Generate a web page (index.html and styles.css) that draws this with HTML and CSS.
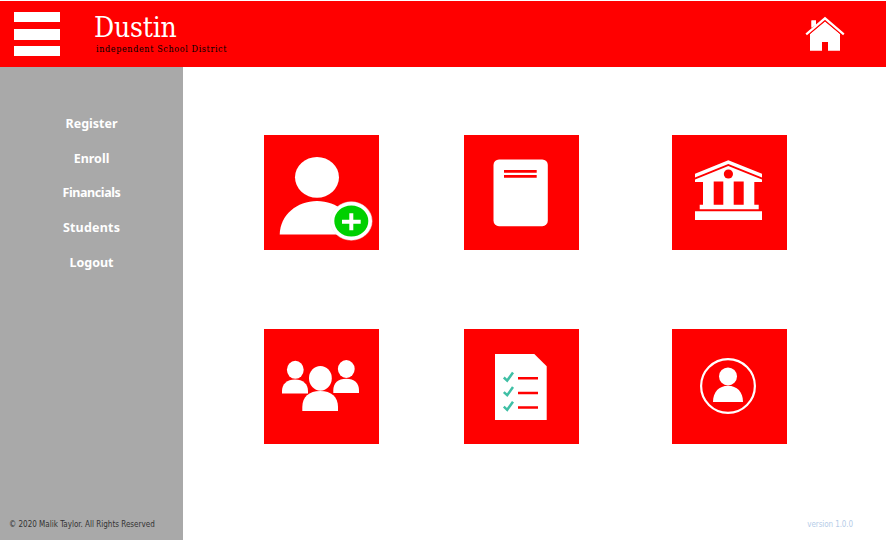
FILE: index.html
```html
<!DOCTYPE html>
<html lang="en">
<head>
<meta charset="utf-8">
<title>Dustin Independent School District</title>
<link rel="stylesheet" href="styles.css">
</head>
<body>
<header class="topbar">
  <div class="menu"><span></span><span></span><span></span></div>
  <div class="brand">
    <h1 class="brand-name">Dustin</h1>
    <p class="brand-sub">independent School District</p>
  </div>
  <svg class="home" viewBox="0 0 40 36" fill="#fff">
    <path d="M6.5 13V4.5H11V9M5 18 20 5.5 35 18V34.8H23V26H17V34.8H5Z"/>
    <path d="M1.2 18.3 20 2.3 38.8 18.3" fill="none" stroke="red" stroke-width="4.2"/>
    <path d="M6.5 12V4.5H11V9Z"/>
    <path d="M1.2 18.3 20 2.3 38.8 18.3" fill="none" stroke="#fff" stroke-width="2.2"/>
  </svg>
</header>
<div class="body">
  <aside class="sidebar">
    <nav class="nav">
      <a>Register</a>
      <a>Enroll</a>
      <a class="tight">Financials</a>
      <a class="loose">Students</a>
      <a>Logout</a>
    </nav>
    <p class="copyright">© 2020 Malik Taylor. All Rights Reserved</p>
  </aside>
  <main class="main">
    <div class="tiles">
      <svg class="tile" viewBox="0 0 115 115" fill="#fff">
        <ellipse cx="53" cy="42.3" rx="22" ry="20.4"/>
        <path d="M15.7 99.5C16 80 33 66 53 66S90 80 90 99.5Z"/>
        <ellipse cx="87.3" cy="86" rx="20.8" ry="19.2" stroke="#eee" stroke-width=".5"/>
        <ellipse cx="87.3" cy="86" rx="17" ry="15.6" fill="#00d000"/>
        <path d="M78 86.7H96.7M87.3 78.2V95.2" stroke="#fff" stroke-width="4"/>
      </svg>
      <svg class="tile" viewBox="0 0 115 115" fill="#fff">
        <rect x="29.5" y="24.5" width="54.3" height="66.7" rx="5.5"/>
        <path d="M40 36.4H72.7M40 41.4H72.7" stroke="red" stroke-width="2.8"/>
      </svg>
      <svg class="tile" viewBox="0 0 115 115" fill="#fff">
        <path d="M23 38.7 56.3 25.3 90 38.7V42.5L56.3 29 23 42.5Z"/>
        <path d="M23 44.5 56.3 31 90 44.5V47H82.3V69.7H86.7V74.3H27.7V69.7H31V47H23Z"/>
        <path d="M23 76.3H90V85H23Z"/>
        <path d="M41.7 46.5H51.3V69.7H41.7ZM61.7 46.5H71.7V69.7H61.7Z" fill="red"/>
        <circle cx="56.4" cy="39" r="4.6" fill="red"/>
      </svg>
      <svg class="tile" viewBox="0 0 115 115" fill="#fff">
        <ellipse cx="31.3" cy="40.8" rx="8.4" ry="9"/>
        <path d="M18 64.5V62C18 55 23 50.5 31 50.5S44 55 44 62V64.5Z"/>
        <ellipse cx="82.3" cy="40" rx="8.4" ry="9"/>
        <path d="M69.3 64V61.3C69.3 54 74 49.7 82.2 49.7S95 54 95 61.3V64Z"/>
        <ellipse cx="56.4" cy="49.3" rx="11.4" ry="12.4"/>
        <path d="M38.3 82V78C38.3 68 45 62 56.2 62S74 68 74 78V82Z"/>
      </svg>
      <svg class="tile" viewBox="0 0 115 115" fill="#fff">
        <path d="M31 25H70.3L82.7 37.3V91H31Z"/>
        <path d="M54 49.3H74M54 64H74M54 78.6H74" stroke="red" stroke-width="2.5"/>
        <path d="M39.8 48.5 43.2 51.6 49 43.5M39.8 63.1 43.2 66.2 49 58.1M39.8 77.7 43.2 80.8 49 72.7" fill="none" stroke="#3fbfa5" stroke-width="2.5"/>
      </svg>
      <svg class="tile" viewBox="0 0 115 115" fill="#fff">
        <circle cx="56" cy="57" r="26.9" fill="none" stroke="#fff" stroke-width="2.2"/>
        <circle cx="56" cy="47.4" r="9"/>
        <path d="M41 73C41 63 47 56.8 56 56.8S71 63 71 73Z"/>
      </svg>
    </div>
    <p class="version">version 1.0.0</p>
  </main>
</div>
</body>
</html>
```
FILE: styles.css
```css
* { box-sizing: border-box; }
body {
  margin: 0;
  width: 886px;
  height: 540px;
  padding-top: 1px;
  overflow: hidden;
  background: #fff;
  display: flex;
  flex-direction: column;
  font-family: "DejaVu Sans Condensed", "DejaVu Sans", sans-serif;
}
h1, p { margin: 0; font-weight: normal; }
.topbar {
  height: 66px;
  flex: none;
  background: red;
  display: flex;
  align-items: flex-start;
  padding: 11px 41px 0 14px;
}
.menu {
  width: 46px;
  height: 44px;
  display: flex;
  flex-direction: column;
  justify-content: space-between;
}
.menu span { height: 10px; background: #fff; }
.menu span:nth-child(2) { height: 11px; }
.brand { margin-left: 34px; white-space: nowrap; }
.brand-name {
  font: 28px/32px "DejaVu Serif Condensed", "DejaVu Serif", serif;
  font-stretch: condensed;
  letter-spacing: -0.2px;
  color: #fff;
}
.brand-sub {
  font: 9px/12px "DejaVu Serif", serif;
  font-stretch: condensed;
  letter-spacing: 0.6px;
  margin: -1px 0 0 2px;
  color: #000;
}
.home { width: 40px; height: 36px; margin: 4px 0 0 auto; }
.body { flex: 1; display: flex; }
.sidebar {
  width: 183px;
  background: #a9a9a9;
  display: flex;
  flex-direction: column;
  justify-content: space-between;
  padding: 40px 0 8px;
}
.nav {
  display: flex;
  flex-direction: column;
  align-items: center;
  font: bold 12.5px/34.7px "Noto Sans", sans-serif;
  color: #fff;
}
.tight { letter-spacing: -0.4px; }
.loose { letter-spacing: 0.2px; }
.copyright {
  padding-left: 9px;
  font-size: 8px;
  line-height: 14px;
  font-stretch: condensed;
  white-space: nowrap;
  color: #333;
}
.main {
  flex: 1;
  display: flex;
  flex-direction: column;
  justify-content: space-between;
  padding: 68px 33px 8px 81px;
}
.tiles {
  display: grid;
  grid-template-columns: 200px 208px 115px;
  row-gap: 79px;
}
.tile { display: block; width: 115px; height: 115px; background: red; }
.version {
  align-self: flex-end;
  font-size: 8px;
  line-height: 14px;
  font-stretch: condensed;
  letter-spacing: -0.1px;
  color: #b5cce8;
}
```
